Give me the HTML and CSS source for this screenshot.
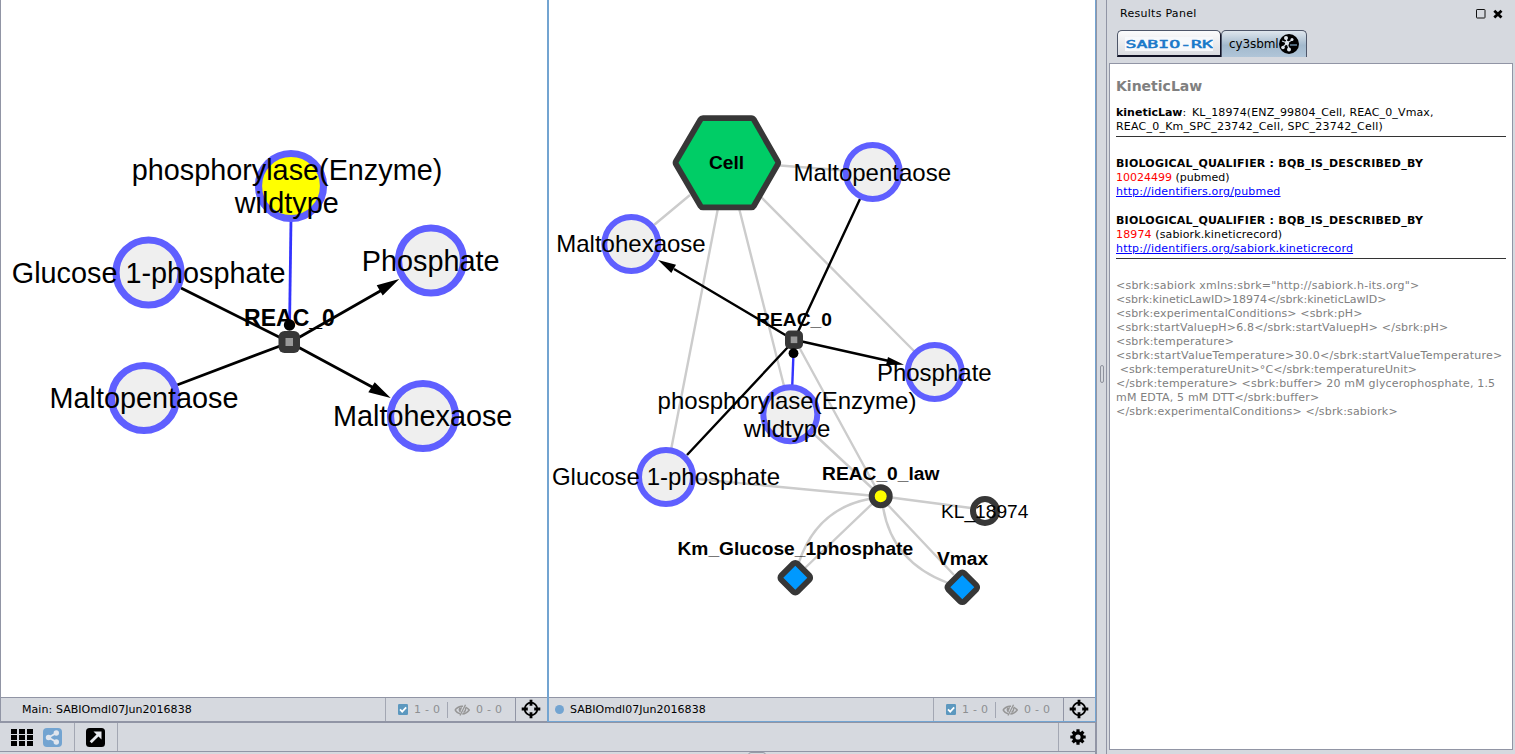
FILE: index.html
```html
<!DOCTYPE html>
<html lang="en">
<head>
<meta charset="utf-8">
<title>Network view</title>
<link rel="stylesheet" href="styles.css">
</head>
<body>
<svg class="defs" aria-hidden="true">
  <symbol id="check" viewBox="0 0 10 11"><rect width="10" height="11" rx="1.2" fill="#5c98bf"/><path d="M2 5.4 4.2 7.7 8.2 3.4" fill="none" stroke="#fff" stroke-width="1.7"/></symbol>
  <symbol id="eye" viewBox="0 0 16 12"><g fill="none" stroke="#969696"><path d="M1 6Q4.5 1.6 9 2.2M1 6Q3 9 6 9.8M11.500 3.200Q14 4.500 15.200 6Q12.500 9.700 8.300 10" stroke-width="1.500"/><path d="M11.500 .8 6 11.500" stroke-width="1.300"/><path d="M6 3.600Q4.300 6 6.500 8M7.500 3.300 6.200 6.500M11.700 4Q12 7 9.500 8.500" stroke-width="1.300"/></g></symbol>
  <symbol id="target" viewBox="0 0 20 20"><circle cx="10" cy="10" r="6.300" fill="none" stroke="#000" stroke-width="1.800"/><path d="M10 .7V6.800M10 13.200v6.100M.7 10h6.100M13.200 10h6.100" stroke="#000" stroke-width="2.800"/></symbol>
</svg>
<div class="app">
  <main class="work">
    <div class="views">
      <section class="view">
        <svg class="graph" viewBox="1 0 546 697" width="546" height="697">
          <g class="edge wide">
            <path d="M181 288 281 338M177 385 280 346M298 338 382 290M298 347 374 388"/>
            <path class="mod" d="M291 219 289.600 322"/>
          </g>
          <path d="M399.300 279 376.700 285.300 382.700 295.500ZM390.700 398 374.700 382.300 368.300 392.300Z"/>
          <g class="species wide">
            <circle cx="291" cy="186" r="32.500" class="selected"/>
            <circle cx="148.500" cy="272.500" r="32.500"/><circle cx="144" cy="398" r="32.500"/>
            <circle cx="431" cy="260.500" r="32.500"/><circle cx="423" cy="416" r="32.500"/>
          </g>
          <rect class="dark" x="278.500" y="331" width="21.500" height="22" rx="6"/>
          <rect class="core" x="285.500" y="338" width="7.500" height="8"/>
          <circle cx="289.500" cy="325" r="5.700"/>
          <g class="label large">
            <text x="287" y="180">phosphorylase(Enzyme)</text><text x="286.800" y="212.700">wildtype</text>
            <text x="148.700" y="282.700">Glucose 1-phosphate</text><text x="144" y="408">Maltopentaose</text>
            <text x="430.700" y="270.700">Phosphate</text><text x="422.700" y="426">Maltohexaose</text>
          </g>
          <text class="label strong large-strong" x="289.500" y="326">REAC_0</text>
        </svg>
        <footer class="status">
          <span class="name main"><span>Main:</span>SABIOmdl07Jun2016838</span>
          <span class="counts"><svg width="10" height="11"><use href="#check"/></svg><b>1 - 0</b><i></i><svg width="16" height="12"><use href="#eye"/></svg><b>0 - 0</b></span>
          <span class="aim"><svg width="20" height="20"><use href="#target"/></svg></span>
        </footer>
      </section>
      <section class="view active">
        <svg class="graph" viewBox="549 0 546 697" width="546" height="697">
          <g class="edge pale">
            <path d="M690 195 654 225M718 208 671 450M739 208 784 386M761 197 914 351M780 165.500 845 170.500M799 347 876 488M815 435 873 489M697 479 870 495.500M891 497.500 971 508M873 503 805 568M887 504 954 575"/>
            <path d="M869 499Q817 509 799 562M883 507Q892 562 948 583"/>
          </g>
          <g class="edge"><path d="M860 199 797 334M787 336 674 269M687 455 788 347M802 341.500 889 361"/><path class="mod" d="M793.400 355 792.200 387"/></g>
          <path d="M658 260 676 264.700 671.300 273ZM904 364.800 888 357 886 365Z"/>
          <path class="framed cell" d="M703 121H751.300L775.300 162.800 751.300 204.500H703L678.500 162.800Z"/>
          <g class="species">
            <circle cx="872.700" cy="172" r="27"/><circle cx="631.300" cy="244" r="27"/><circle cx="934.700" cy="372" r="27"/>
            <circle cx="790.300" cy="414.300" r="27"/><circle cx="666" cy="477" r="27"/>
          </g>
          <rect class="dark" x="785" y="330.500" width="18" height="18.500" rx="5"/>
          <rect class="core" x="790.700" y="336.500" width="6.600" height="6.600"/>
          <circle cx="793.500" cy="353.200" r="4.900"/>
          <circle class="ring law" cx="880.700" cy="496.300" r="9"/>
          <circle class="ring kinetic" cx="985" cy="511" r="12"/>
          <path class="framed param" d="M795.300 565.700 807.300 577.700 795.300 589.700 783.300 577.700ZM962.300 575.300 974.300 587.300 962.300 599.300 950.300 587.300Z"/>
          <g class="label">
            <text x="631" y="252.400">Maltohexaose</text><text x="872.300" y="181">Maltopentaose</text>
            <text x="934.300" y="380.800">Phosphate</text><text x="787" y="409">phosphorylase(Enzyme)</text>
            <text x="787" y="436.700">wildtype</text><text x="666" y="485.400">Glucose 1-phosphate</text>
          </g>
          <g class="label strong">
            <text x="726.600" y="169">Cell</text><text x="794" y="325.800">REAC_0</text><text x="880.700" y="480">REAC_0_law</text>
            <text x="795.300" y="555.300">Km_Glucose_1phosphate</text><text x="962.500" y="565.300">Vmax</text>
          </g>
          <text class="label small" x="984.700" y="517.700">KL_18974</text>
        </svg>
        <footer class="status">
          <span class="name"><em></em>SABIOmdl07Jun2016838</span>
          <span class="counts"><svg width="10" height="11"><use href="#check"/></svg><b>1 - 0</b><i></i><svg width="16" height="12"><use href="#eye"/></svg><b>0 - 0</b></span>
          <span class="aim"><svg width="20" height="20"><use href="#target"/></svg></span>
        </footer>
      </section>
    </div>
    <div class="toolbar">
      <span class="group modes">
        <svg width="22" height="17" viewBox="0 0 22 17"><path d="M0 0h6v5H0zM8 0h6v5H8zM16 0h6v5h-6zM0 6h6v5H0zM8 6h6v5H8zM16 6h6v5h-6zM0 12h6v5H0zM8 12h6v5H8zM16 12h6v5h-6z"/></svg>
        <svg width="19" height="19" viewBox="0 0 19 19"><rect width="19" height="19" rx="4" fill="#73a4d1"/><path d="M13.500 5 5.500 9.500 13.500 14" fill="none" stroke="#e1e6ee" stroke-width="1.900"/><g fill="#e1e6ee"><circle cx="13.300" cy="5" r="2.700"/><circle cx="5.500" cy="9.500" r="2.700"/><circle cx="13.300" cy="14" r="2.700"/></g></svg>
      </span>
      <span class="group detach"><svg width="19" height="19" viewBox="0 0 19 19"><rect width="19" height="19" rx="3.500"/><path d="M4.700 14.300 12 7" stroke="#e7e9ee" stroke-width="2.800"/><path d="M7.500 3.500H15.500V11.500Z" fill="#e7e9ee"/></svg></span>
      <span class="group settings"><svg width="16" height="16" viewBox="-8 -8 16 16"><g stroke="#000" stroke-width="3.200"><path d="M0-7.700V7.700M-7.700 0H7.700M-5.400-5.400 5.400 5.400M-5.400 5.400 5.400-5.400"/></g><circle r="5.800"/><circle r="2.600" fill="#d6d9df"/></svg></span>
    </div>
    <div class="bottom"><span></span></div>
  </main>
  <div class="splitter"><span></span></div>
  <aside class="results">
    <header class="title">Results Panel
      <svg width="28" height="10" viewBox="0 0 28 10"><rect x="1.500" y=".5" width="8.500" height="8.500" rx=".6" fill="none" stroke="#111"/><path d="M19.300 1.700 26.500 8.500M26.500 1.700 19.300 8.500" stroke="#000" stroke-width="2.800"/></svg>
    </header>
    <nav class="tabs">
      <span class="tab sabio"><svg width="88" height="14" viewBox="0 0 88 14"><rect width="88" height="14" fill="#f7f9fc"/><text x="0.500" y="11" textLength="87.500" lengthAdjust="spacingAndGlyphs">SABIO-RK</text></svg></span>
      <span class="tab current"><span>cy3sbml</span><svg width="20" height="20" viewBox="0 0 20 20"><circle cx="10" cy="10" r="10"/><path d="M7 4 8 9 4 13M8 9 13 6M8 9 10 15M8 9 3 7" stroke="#cdd8e3" stroke-width="1.200"/><g fill="#dfe6ed"><circle cx="7" cy="4" r="2"/><circle cx="8" cy="9" r="2.200"/><circle cx="4" cy="13.500" r="1.800"/><circle cx="10" cy="15.500" r="2"/><circle cx="13" cy="5.500" r="1.500"/></g><path d="M11 11h7" stroke="#4d6477" stroke-width="2"/></svg></span>
    </nav>
    <article class="content">
      <h1>KineticLaw</h1>
      <p><strong>kineticLaw</strong><span class="t1">:&nbsp;</span><span class="kl">KL_18974(ENZ_99804_Cell, REAC_0_Vmax,</span><br><span class="t3">REAC_0_Km_SPC_23742_Cell, SPC_23742_Cell)</span></p>
      <hr>
      <p class="ref"><strong class="t3">BIOLOGICAL_QUALIFIER : BQB_IS_DESCRIBED_BY</strong><br><span class="id">10024499</span> (pubmed)<br><a class="t2">http://identifiers.org/pubmed</a></p>
      <p class="ref second"><strong class="t3">BIOLOGICAL_QUALIFIER : BQB_IS_DESCRIBED_BY</strong><br><span class="t1"><span class="id">18974</span> (sabiork.kineticrecord)</span><br><a class="t2">http://identifiers.org/sabiork.kineticrecord</a></p>
      <hr>
      <div class="xml">
        <div class="t3">&lt;sbrk:sabiork xmlns:sbrk="http://sabiork.h-its.org"&gt;</div>
        <div>&lt;sbrk:kineticLawID&gt;18974&lt;/sbrk:kineticLawID&gt;</div>
        <div class="t1">&lt;sbrk:experimentalConditions&gt; &lt;sbrk:pH&gt;</div>
        <div class="t2">&lt;sbrk:startValuepH&gt;6.8&lt;/sbrk:startValuepH&gt; &lt;/sbrk:pH&gt;</div>
        <div class="t2">&lt;sbrk:temperature&gt;</div>
        <div class="t4">&lt;sbrk:startValueTemperature&gt;30.0&lt;/sbrk:startValueTemperature&gt;</div>
        <div class="t1">&nbsp;&lt;sbrk:temperatureUnit&gt;°C&lt;/sbrk:temperatureUnit&gt;</div>
        <div class="t2">&lt;/sbrk:temperature&gt; &lt;sbrk:buffer&gt; 20 mM glycerophosphate, 1.5</div>
        <div class="t2">mM EDTA, 5 mM DTT&lt;/sbrk:buffer&gt;</div>
        <div class="t2">&lt;/sbrk:experimentalConditions&gt; &lt;/sbrk:sabiork&gt;</div>
      </div>
    </article>
  </aside>
</div>
</body>
</html>
```
FILE: styles.css
```css
* { box-sizing: border-box; }
body { margin: 0; background: #d6d9df; color: #000; font: 11px/14px "DejaVu Sans", sans-serif; overflow: hidden; }
svg { display: block; flex: none; }
.defs { display: none; }
.app { display: flex; width: 1515px; height: 754px; overflow: hidden; }

.work { width: 1097px; display: flex; flex-direction: column; border-right: 2px solid #9195a5; }
.views { display: flex; flex: none; height: 723px; border-bottom: 1px solid #9195a5; }
.view { display: flex; flex-direction: column; background: #fff; width: 547px; border-left: 1px solid #9195a5; border-bottom: 1px solid #9195a5; }
.view.active { width: 549px; border: 0 solid #73a4d1; border-width: 0 1px 1px 2px; }
.graph { height: 697px; }
.status { flex: 1; display: flex; align-items: stretch; background: #d6d9df; border-top: 1px solid #9195a5; }
.name { flex: 1; display: flex; align-items: center; padding-left: 6px; letter-spacing: .03px; }
.name.main { padding-left: 21px; }
.name.main span { width: 34px; }
.name em { width: 9px; height: 9px; border-radius: 50%; background: #73a4d1; margin-right: 6px; }
.counts { width: 130px; display: flex; align-items: center; padding-left: 12px; border-left: 1px solid #a3a7b3; color: #8d8f92; }
.counts b { font-weight: normal; width: 27px; margin-left: 6px; white-space: nowrap; letter-spacing: .25px; }
.counts i { width: 1px; height: 16px; margin: 0 6px; background: #a3a7b3; }
.aim { width: 32px; padding: 1px 0 0 5px; border-left: 1px solid #9195a5; }
.toolbar { flex: none; height: 29px; display: flex; border-bottom: 1px solid #9195a5; }
.group { display: flex; align-items: center; }
.modes { width: 75px; gap: 10px; padding-left: 11px; border-right: 1px solid #a3a7b3; }
.detach { width: 43px; padding-left: 11px; border-right: 1px solid #a3a7b3; }
.settings { width: 37px; margin-left: auto; padding-left: 11px; border-left: 1px solid #a3a7b3; }
.bottom { flex: none; height: 2px; overflow: hidden; display: flex; justify-content: center; padding-left: 419px; }
.bottom span { width: 18px; height: 4px; border: 1px solid #979ba6; border-radius: 3px 3px 0 0; }

.edge { fill: none; stroke: #000; stroke-width: 2.4; }
.edge.wide { stroke-width: 2.8; }
.edge.pale { stroke: #ccc; }
.edge .mod { stroke: #33f; }
.species { fill: #efefef; stroke: #5f5fff; stroke-width: 6; }
.species.wide { stroke-width: 7.2; }
.species .selected { fill: #ff0; }
.dark { fill: #373737; }
.core { fill: #999; }
.ring { stroke: #373737; stroke-width: 6; }
.framed { stroke: #373737; stroke-width: 11.6; stroke-linejoin: round; paint-order: stroke; }
.cell { fill: #00cd66; }
.law { fill: #ff0; }
.kinetic { fill: #fff; }
.param { fill: #0099ff; }
.label { font-family: "Liberation Sans", sans-serif; font-size: 24px; text-anchor: middle; }
.label.large { font-size: 28.8px; }
.label.small { font-size: 19.2px; }
.label.strong { font-size: 19.2px; font-weight: bold; }
.label.large-strong { font-size: 23px; }

.splitter { width: 10px; display: flex; align-items: center; justify-content: center; border-right: 1px solid #9195a5; }
.splitter span { width: 4px; height: 18px; margin-bottom: 7px; border: 1px solid #8e929d; border-radius: 2px; }
.results { width: 408px; padding: 0 2px 4px; display: flex; flex-direction: column; }
.title { height: 30px; display: flex; justify-content: space-between; align-items: center; padding: 0 10px 3px 11px; letter-spacing: .28px; }
.tabs { height: 33px; display: flex; padding-left: 8px; }
.tab { height: 27px; display: flex; align-items: center; border: 1px solid #4e5669; border-radius: 5px 5px 0 0; }
.sabio { width: 104px; padding-left: 7px; border-bottom: 2px solid #111326; border-right-color: #111326; background: linear-gradient(#fbfbfc, #dadce1); }
.sabio svg { margin-top: 2px; }
.sabio text { font: 11px "DejaVu Sans Mono", monospace; fill: #1978c9; stroke: #1978c9; stroke-width: .5; }
.current { width: 86px; padding-left: 7px; border-bottom: 0; background: linear-gradient(#dfe6ed, #a2b9cd 55%, #b0c5d8); font-size: 12px; }
.current > span { width: 50px; letter-spacing: -.1px; }
.content { flex: 1; background: #fff; border: 1px solid #9195a5; padding: 13px 6px 0; white-space: nowrap; }
h1 { margin: 0; height: 29px; font-size: 14px; line-height: 18px; color: #808080; }
p { margin: 0; }
hr { margin: 2px 0 0; height: 1px; border: 0; background: #333; }
.ref { margin-top: 20px; }
.ref.second { margin-top: 15px; }
.id { color: #f00; }
a { color: #00f; text-decoration: underline; }
.xml { margin-top: 20px; color: #808080; }
.kl { margin-left: 2px; letter-spacing: .125px; }
.t1 { letter-spacing: .13px; }
.t2 { letter-spacing: .175px; }
.t3 { letter-spacing: .22px; }
.t4 { letter-spacing: .26px; }
```
